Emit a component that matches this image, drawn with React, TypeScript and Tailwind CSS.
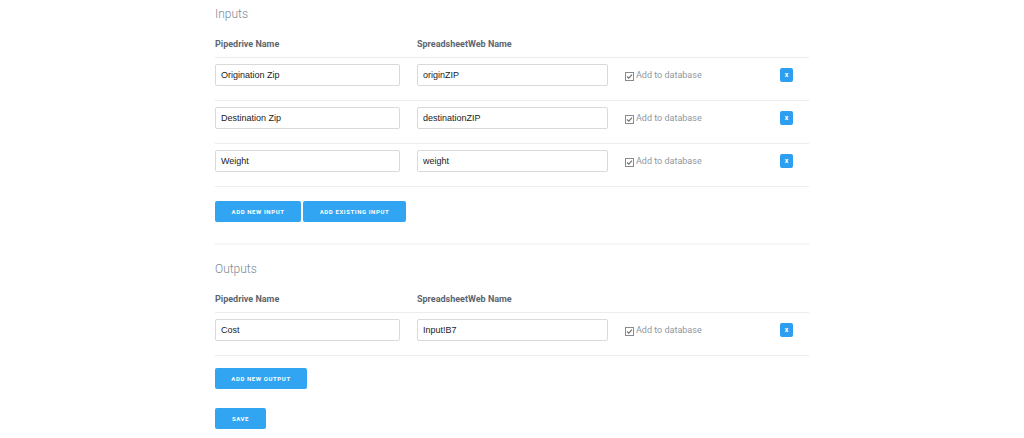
const inputs = [
  { name: "Origination Zip", sheet: "originZIP" },
  { name: "Destination Zip", sheet: "destinationZIP" },
  { name: "Weight", sheet: "weight" },
];

const outputs = [{ name: "Cost", sheet: "Input!B7" }];

function CheckIcon() {
  return (
    <svg width="9" height="9" viewBox="0 0 9 9" className="mr-[2px]">
      <rect x="0.5" y="0.5" width="8" height="8" fill="none" stroke="#8a8a8a" strokeWidth="1" />
      <path d="M2 4.5 L3.8 6.2 L7 2.6" fill="none" stroke="#6f6f6f" strokeWidth="1.1" />
    </svg>
  );
}

function MappingRow({ name, sheet }: { name: string; sheet: string }) {
  return (
    <div className="grid grid-cols-[202px_208px_1fr_auto] items-center border-t border-[#ececec] pt-[6px] pb-[14px] pr-[16px]">
      <input
        readOnly
        value={name}
        className="h-[22px] w-[185px] rounded-[2px] border border-[#d9d9d9] px-[5px] text-[9px] text-[#222] outline-none font-['Liberation_Sans',Arial,sans-serif]"
      />
      <input
        readOnly
        value={sheet}
        className="h-[22px] w-[191px] rounded-[2px] border border-[#d9d9d9] px-[5px] text-[9px] text-[#222] outline-none font-['Liberation_Sans',Arial,sans-serif]"
      />
      <label className="flex translate-y-[1px] items-center text-[9px] text-[#8f979f]">
        <CheckIcon />
        Add to database
      </label>
      <button className="flex h-[14px] w-[13px] items-center justify-center rounded-[2px] bg-[#2c9ff0] text-[7px] font-bold leading-none text-white">
        x
      </button>
    </div>
  );
}

function Header() {
  return (
    <div className="mt-[14px] grid grid-cols-[202px_208px_1fr] pb-[5px] text-[9px] font-bold leading-[15px] text-[#5c6670]">
      <span>Pipedrive Name</span>
      <span>SpreadsheetWeb Name</span>
    </div>
  );
}

function BlueButton({ children, width }: { children: React.ReactNode; width: string }) {
  return (
    <button
      className={`flex h-[21px] ${width} items-center justify-center rounded-[2px] bg-[#31a5f2] text-[6px] font-bold uppercase tracking-[0.1em] text-white`}
    >
      {children}
    </button>
  );
}

export default function App() {
  return (
    <div className="min-h-screen w-full bg-white font-['Roboto',sans-serif]">
      <div className="mx-auto w-[594px] pt-[5px]">
        <h2 className="text-[12px] font-light leading-[18px] text-[#7b8a97]">Inputs</h2>
        <Header />
        {inputs.map((r) => (
          <MappingRow key={r.sheet} name={r.name} sheet={r.sheet} />
        ))}
        <div className="flex gap-[2px] border-t border-[#ececec] pt-[14px] pb-[21px]">
          <BlueButton width="w-[86px]">Add new input</BlueButton>
          <BlueButton width="w-[103px]">Add existing input</BlueButton>
        </div>

        <div className="border-t-2 border-[#f6f6f6] pt-[15px]">
          <h2 className="text-[12px] font-light leading-[18px] text-[#7b8a97]">Outputs</h2>
          <Header />
          {outputs.map((r) => (
            <MappingRow key={r.sheet} name={r.name} sheet={r.sheet} />
          ))}
          <div className="flex border-t border-[#ececec] pt-[12px]">
            <BlueButton width="w-[92px]">Add new output</BlueButton>
          </div>
          <div className="flex pt-[19px]">
            <BlueButton width="w-[51px]">Save</BlueButton>
          </div>
        </div>
      </div>
    </div>
  );
}
